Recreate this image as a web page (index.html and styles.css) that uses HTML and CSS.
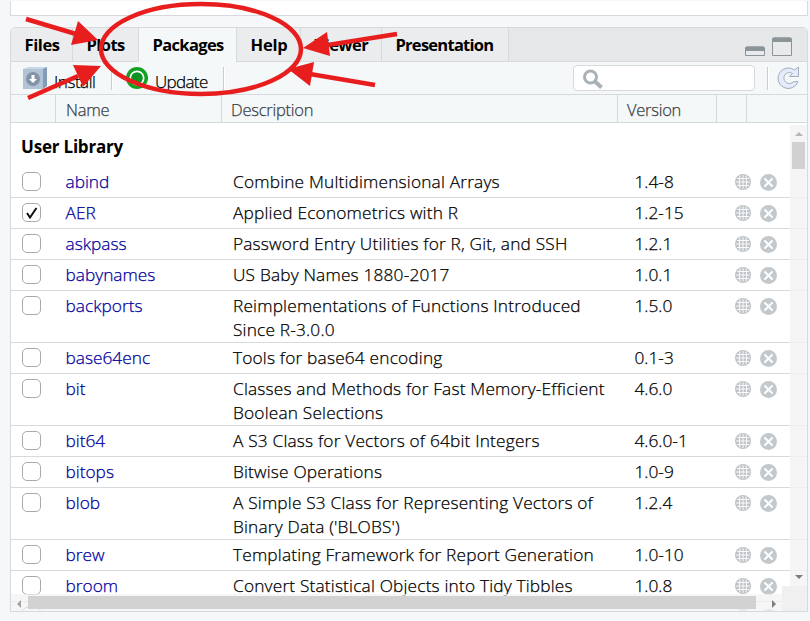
FILE: index.html
```html
<!DOCTYPE html>
<html lang="en">
<head>
<meta charset="utf-8">
<title>Packages</title>
<link rel="stylesheet" href="styles.css">
</head>
<body>
<svg class="defs" width="0" height="0">
  <symbol id="globe" viewBox="0 0 16 16">
    <circle cx="8" cy="8" r="8" fill="#bfc4c8"/>
    <path d="M8 1v14M2 4.500h12M1 8h14M2 11.500h12M5 1.500Q3.600 8 5 14.500M11 1.500Q12.400 8 11 14.500" fill="none" stroke="#fff" stroke-width=".9"/>
  </symbol>
  <symbol id="remove" viewBox="0 0 17 17">
    <circle cx="8.500" cy="8.500" r="8.500" fill="#c3c8cc"/>
    <path d="M5 5l7 7M12 5l-7 7" stroke="#fff" stroke-width="2" stroke-linecap="round"/>
  </symbol>
</svg>
<div class="upper"></div>
<main class="panel">
  <nav class="tabs">
    <span class="tab files"><b>Files</b></span><span class="tab plots"><b>Plots</b></span><span class="tab packages active"><b>Packages</b></span><span class="tab help"><b>Help</b></span><span class="tab viewer"><b>Viewer</b></span><span class="tab presentation"><b>Presentation</b></span>
    <svg class="window" width="50" height="22" viewBox="0 0 50 22">
      <path d="M1.500 13q0-2 2-2h15q2 0 2 2v6.500h-19z" fill="#e8eaeb" stroke="#8a9499"/>
      <path d="M1 15v-2.500q0-2 2-2h16q2 0 2 2V15z" fill="#8a9499"/>
      <path d="M28.500 4q0-2 2-2h15q2 0 2 2v15.500h-19z" fill="#e8eaeb" stroke="#8a9499"/>
      <path d="M28 6V3.500q0-2 2-2h16q2 0 2 2V6z" fill="#8a9499"/>
    </svg>
  </nav>
  <div class="toolbar">
    <svg class="install-icon" width="24" height="22" viewBox="0 0 24 22">
      <path d="M0 2l5-2h19l-4 3z" fill="#c8d7e6"/><path d="M20 2l4-2v19l-4 3z" fill="#829db8"/>
      <path d="M0 2h20v20H0z" fill="#b1c4d6"/><circle cx="10" cy="12" r="7" fill="#8494a8"/>
      <path d="M8.500 8h3v4h2.500l-4 4-4-4h2.500z" fill="#fff"/>
    </svg>
    <span class="install">Install</span><i class="sep s1"></i>
    <svg class="update-icon" width="22" height="22" viewBox="0 0 22 22"><circle cx="11" cy="11" r="11" fill="#12a025"/><circle cx="11" cy="11" r="6.700" fill="#0d9420" stroke="#fff" stroke-width="1.700"/></svg>
    <span class="update">Update</span><i class="sep s2"></i>
    <div class="search"><svg width="22" height="22" viewBox="0 0 22 22"><circle cx="8.500" cy="8" r="6" fill="none" stroke="#a8b2b7" stroke-width="3"/><path d="M13 12.500l6.500 6" stroke="#a8b2b7" stroke-width="4"/></svg></div>
    <i class="sep s3"></i>
    <svg class="refresh" width="23" height="24" viewBox="0 0 23 24"><path d="M17.500 4L21.500 1v9.500h-9L15.500 7.500a5.500 5.500 0 1 0 1 8.200h4.500A10.300 10.300 0 1 1 17.500 4z" fill="#e5ecf9" stroke="#a3adbd"/></svg>
  </div>
  <div class="head"><span></span><span>Name</span><span>Description</span><span>Version</span><span></span><span></span></div>
  <div class="list">
    <h2>User Library</h2>
    <div id="rows"></div>
    <div class="vbar"><svg width="17" height="462" viewBox="0 0 17 462"><path d="M5 11l4-4 4 4z" fill="#b5b5b5"/><path d="M5 450h8l-4 4z" fill="#7d7d7d"/></svg><i></i></div>
    <div class="hbar"><svg width="771" height="16" viewBox="0 0 771 16"><path d="M10 4v8L6 8z" fill="#a3a3a3"/><path d="M761 4v8l4-4z" fill="#7d7d7d"/></svg><i></i></div>
    <div class="corner"></div>
  </div>
</main>
<svg class="marks" width="810" height="621" viewBox="0 0 810 621">
  <ellipse cx="201" cy="49" rx="100" ry="45" fill="none" stroke="#e81e1e" stroke-width="4.500"/>
  <g stroke="#e81e1e" stroke-width="4.600"><path d="M26 19L76 34M28 98L78 76M397 34L328 45M375 85L310 74"/></g>
  <path d="M98 40L78 21 71 45zM101 66L73 65 83 87zM303 48L327 32 330 56zM288 69L314 62 310 86z" fill="#e81e1e"/>
</svg>
<script src="rows.js"></script>
</body>
</html>
```
FILE: styles.css
```css
*{box-sizing:border-box}
body{margin:0;width:810px;height:621px;overflow:hidden;position:relative;background:#f5f7f9;font:300 17.3px/24px "Open Sans","Noto Sans",sans-serif;color:#000}
.defs{position:absolute}
.upper{height:15px;margin:1px 2px 11px 10px;background:#fff;border:1px solid #d6dadc;border-top:0}
.panel{margin:0 2px 0 10px;height:585px;border:1px solid #d6dadc;border-radius:5px 5px 0 0;background:#f4f8f9;overflow:hidden}
.tabs{display:flex;height:34px;background:#e6e7e9;position:relative;border-bottom:1px solid #d6dadc}
.tab{height:33px;padding-left:13.5px;line-height:34px;border-right:1px solid #d6dadc;background:#ebecee;white-space:nowrap;font-size:16.5px;letter-spacing:-.55px}
.tab b{font-weight:700}
.files{width:62px;letter-spacing:-.4px}.plots{width:66px}.packages{width:98px;letter-spacing:-.65px}.help{width:64px;letter-spacing:-.2px}.viewer{width:81px}.presentation{width:127px;letter-spacing:-.74px}
.tab.active{background:#f4f8f9;height:34px}
.window{margin:8px 0 0 235px;flex:none}
.toolbar{display:flex;align-items:center;height:33px;border-bottom:1px solid #d6dadc}
.install,.update,.head,.row{-webkit-text-stroke:.25px currentColor}
.install-icon{margin-left:12px;flex:none}
.install{width:46px;margin:7px 0 0 7px;font-size:17px;letter-spacing:-.45px}
.sep{width:2px;height:23px;background:linear-gradient(90deg,#c9cdd0 50%,#fff 50%);flex:none}
.s1{margin-left:11px}.update-icon{margin-left:13px;flex:none}
.update{width:56px;margin:7px 0 0 7px;font-size:17px;letter-spacing:-.65px}.s2{margin-left:12px}
.search{width:182px;height:26px;margin-left:348px;border:1px solid #d6dadc;border-radius:4px;background:#fff;padding:3px 8px;flex:none}
.search svg{display:block}
.s3{margin-left:12px}.refresh{margin-left:8px;flex:none}
.head{display:grid;grid-template-columns:45px 166px 396px 99px 30px 1fr;height:28px;border-bottom:1px solid #d6dadc;color:#3a4045;line-height:29px;font-size:16.5px;letter-spacing:-.25px}
.head span{border-right:1px solid #d6dadc;padding-left:9px}
.head span:nth-child(2){padding-left:10px}
.head span:last-child{border:0}
.list{height:488px;background:#fff;position:relative;overflow:hidden}
h2{margin:0;height:44px;padding:12px 0 0 10px;font:700 17px/24px "Open Sans",sans-serif;letter-spacing:-.2px}
.row{display:grid;grid-template-columns:54.5px 167.5px 401.5px 100.5px 25px 1fr;min-height:31px;padding-top:3px;border-bottom:1px solid #d6dadc}
.row a{color:#0000a0}
.t{display:block;white-space:nowrap;letter-spacing:.18px}
.box{width:19px;height:19px;border:1px solid #aaa;border-radius:5px;margin:2px 0 0 11px;display:block;background:#fff}
.box svg{display:block}
.row>svg{width:16px;height:16px;margin-top:4px}
.row>svg:last-child{width:17px;height:17px;margin-top:4px}
.vbar{position:absolute;right:0;top:2px;width:17px;height:462px;background:#f3f3f3cc}
.vbar i{position:absolute;left:2px;top:17px;width:13px;height:27px;background:#d1d1d1}
.hbar{position:absolute;left:0;bottom:0;width:771px;height:17px;background:#f3f3f3b8}
.hbar i{position:absolute;left:17px;top:2px;width:728px;height:13px;background:#cececee8}
.corner{position:absolute;right:0;bottom:0;width:25px;height:25px;background:#f0f0f0}
.marks{position:absolute;left:0;top:0}
```
FILE: rows.js
```js
const data = [
  ["abind", ["Combine Multidimensional Arrays"], "1.4-8"],
  ["AER", ["Applied Econometrics with R"], "1.2-15"],
  ["askpass", ["Password Entry Utilities for R, Git, and SSH"], "1.2.1"],
  ["babynames", ["US Baby Names 1880-2017"], "1.0.1"],
  ["backports", ["Reimplementations of Functions Introduced", "Since R-3.0.0"], "1.5.0"],
  ["base64enc", ["Tools for base64 encoding"], "0.1-3"],
  ["bit", ["Classes and Methods for Fast Memory-Efficient", "Boolean Selections"], "4.6.0"],
  ["bit64", ["A S3 Class for Vectors of 64bit Integers"], "4.6.0-1"],
  ["bitops", ["Bitwise Operations"], "1.0-9"],
  ["blob", ["A Simple S3 Class for Representing Vectors of", "Binary Data ('BLOBS')"], "1.2.4"],
  ["brew", ["Templating Framework for Report Generation"], "1.0-10"],
  ["broom", ["Convert Statistical Objects into Tidy Tibbles"], "1.0.8"],
  ["bslib", ["Custom 'Bootstrap' 'Sass' Themes for 'shiny' and"], "0.9.0"]
];
const check = '<svg width="17" height="17" viewBox="0 0 17 17"><path d="M4 9l3 4.500L13.500 4" fill="none" stroke="#111" stroke-width="2"/></svg>';
document.getElementById("rows").innerHTML = data.map(([name, lines, version]) => `
  <div class="row">
    <div><span class="box">${name === "AER" ? check : ""}</span></div>
    <a>${name}</a>
    <div>${lines.map(l => `<span class="t">${l}</span>`).join("")}</div>
    <div>${version}</div>
    <svg><use href="#globe"/></svg><svg><use href="#remove"/></svg>
  </div>`).join("");
```
